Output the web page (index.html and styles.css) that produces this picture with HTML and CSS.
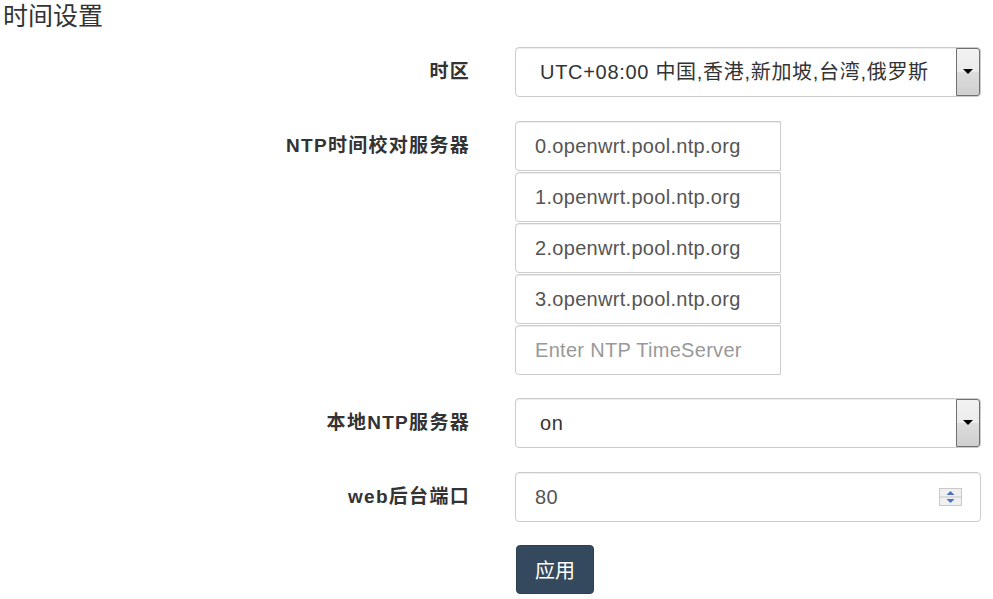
FILE: index.html
```html
<!DOCTYPE html>
<html lang="zh">
<head>
<meta charset="utf-8">
<title>时间设置</title>
<link rel="stylesheet" href="styles.css">
</head>
<body>
<h3 class="title">时间设置</h3>
<div class="form">
  <div class="row">
    <label class="label">时区</label>
    <div class="control wide select-wrap">
      <div class="select">UTC+08:00 中国,香港,新加坡,台湾,俄罗斯</div>
      <span class="drop"><span class="tri"></span></span>
    </div>
  </div>
  <div class="row">
    <label class="label">NTP时间校对服务器</label>
    <div class="control list">
      <div class="input narrow">0.openwrt.pool.ntp.org</div>
      <div class="input narrow">1.openwrt.pool.ntp.org</div>
      <div class="input narrow">2.openwrt.pool.ntp.org</div>
      <div class="input narrow">3.openwrt.pool.ntp.org</div>
      <div class="input narrow placeholder">Enter NTP TimeServer</div>
    </div>
  </div>
  <div class="row">
    <label class="label">本地NTP服务器</label>
    <div class="control wide select-wrap">
      <div class="select">on</div>
      <span class="drop"><span class="tri"></span></span>
    </div>
  </div>
  <div class="row">
    <label class="label">web后台端口</label>
    <div class="control wide select-wrap">
      <div class="input full">80</div>
      <svg class="spin" width="23" height="18" viewBox="0 0 23 18">
        <rect x="0.5" y="0.5" width="22" height="17" fill="#f0f0f0" stroke="#c8c8c8"/>
        <line x1="1" y1="9" x2="22" y2="9" stroke="#c8c8c8"/>
        <polygon points="7.5,7 11.5,3 15.5,7" fill="#4a72c4"/>
        <polygon points="7.5,11 15.5,11 11.5,15" fill="#4a72c4"/>
      </svg>
    </div>
  </div>
  <div class="row">
    <span class="label"></span>
    <button class="btn">应用</button>
  </div>
</div>
</body>
</html>
```
FILE: styles.css
```css
html, body {
  margin: 0;
  padding: 0;
  background: #fff;
}
body {
  font-family: "Liberation Sans", Arial, "Noto Sans CJK SC", sans-serif;
  color: #333;
}
.title {
  margin: 0;
  padding: 2px 0 0 3px;
  font-size: 25px;
  font-weight: normal;
  line-height: 29px;
  color: #333;
}
.form {
  display: flex;
  flex-direction: column;
  gap: 23.5px;
  margin-top: 16px;
}
.row {
  display: flex;
  align-items: flex-start;
  gap: 45px;
}
.label {
  width: 470px;
  flex: none;
  text-align: right;
  font-size: 19px;
  font-weight: bold;
  letter-spacing: 1.3px;
  line-height: 50px;
  color: #333;
}
.control {
  flex: none;
}
.wide {
  width: 466px;
}
.select-wrap {
  position: relative;
}
.select, .input {
  box-sizing: border-box;
  height: 50px;
  border: 1px solid #ccc;
  border-radius: 4px;
  box-shadow: inset 0 1px 1px rgba(0,0,0,0.075);
  font-size: 20px;
  line-height: 48px;
  white-space: nowrap;
  overflow: hidden;
}
.select {
  padding-left: 24px;
  color: #333;
  letter-spacing: 0.7px;
}
.input {
  padding-left: 19px;
  color: #555;
  letter-spacing: 0.3px;
}
.input.full {
  width: 466px;
}
.list {
  display: flex;
  flex-direction: column;
  gap: 1px;
}
.input.narrow {
  width: 266px;
  border-radius: 4px 0 0 4px;
}
.placeholder {
  color: #999;
}
.drop {
  position: absolute;
  top: 1px;
  right: 1px;
  width: 24px;
  height: 48px;
  box-sizing: border-box;
  border: 1px solid #707070;
  border-radius: 0 3px 3px 0;
  background: linear-gradient(#f2f2f2 0%, #ebebeb 50%, #dddddd 51%, #cfcfcf 100%);
  display: flex;
  align-items: center;
  justify-content: center;
}
.tri {
  width: 0;
  height: 0;
  border-left: 5px solid transparent;
  border-right: 5px solid transparent;
  border-top: 5px solid #000;
  margin-top: -1px;
}
.spin {
  position: absolute;
  top: 16px;
  right: 19px;
}
.btn {
  box-sizing: border-box;
  margin-left: 1px;
  width: 78px;
  height: 49px;
  border: 1px solid #2c3e50;
  border-radius: 4px;
  background: #34495e;
  color: #fff;
  font-family: "Liberation Sans", Arial, "Noto Sans CJK SC", sans-serif;
  font-size: 20px;
  padding: 0;
}
```
